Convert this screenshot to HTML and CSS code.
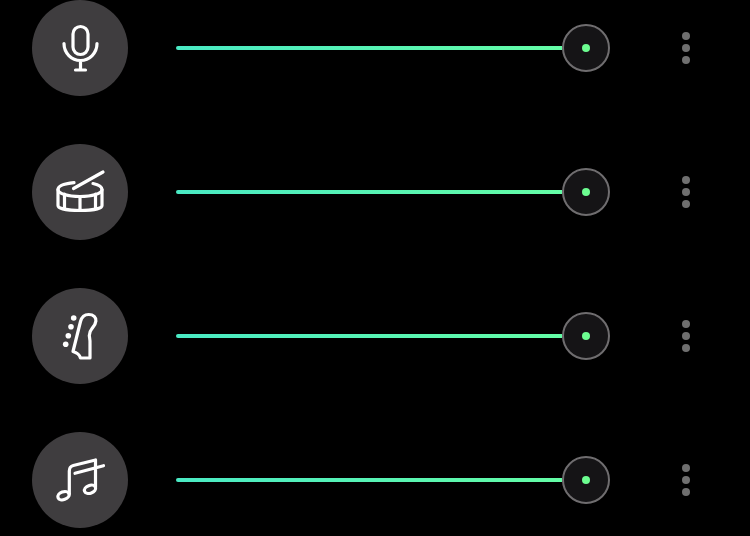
FILE: index.html
```html
<!DOCTYPE html>
<html lang="en">
<head>
  <meta charset="UTF-8" />
  <meta name="viewport" content="width=device-width, initial-scale=1.0"/>
  <title>Mixer</title>
  <link rel="stylesheet" href="styles.css">
</head>
<body>
  <div class="mixer">

    <!-- Vocals -->
    <div class="channel">
      <div class="channel-icon">
        <svg viewBox="0 0 96 96">
          <rect x="41" y="26.500" width="15" height="28" rx="7.500"/>
          <path d="M32 43.500a16.500 17 0 0 0 33 0M48.500 60.500v9.500M43.500 70h10"/>
        </svg>
      </div>
      <div class="slider">
        <div class="slider-track"></div>
        <div class="slider-knob"><span></span></div>
      </div>
      <div class="more"><span></span><span></span><span></span></div>
    </div>

    <!-- Drums -->
    <div class="channel">
      <div class="channel-icon">
        <svg viewBox="0 0 96 96">
          <path d="M41.500 44.500 71 28M42 38.600C32 39.600 26 42 26 45.500c0 4 9.800 7 22 7s22-3 22-7c0-2.700-3.500-4.800-9-6"/>
          <path d="M26 45.500v16c0 3 9.800 5 22 5s22-2 22-5v-16M32.500 50v15M48 52.500V66.500M63.500 50v15"/>
        </svg>
      </div>
      <div class="slider">
        <div class="slider-track"></div>
        <div class="slider-knob"><span></span></div>
      </div>
      <div class="more"><span></span><span></span><span></span></div>
    </div>

    <!-- Guitar -->
    <div class="channel">
      <div class="channel-icon">
        <svg viewBox="0 0 96 96">
          <path d="M58 70H48.500c-1-3.500-4-5.500-7.500-6.500L48.500 33.500c1.300-5 4.300-7 8.200-7 4.800 0 7.500 3 7.200 6.500-.3 3.500-2.200 5.500-3.900 7.500-1.800 2.200-2.800 4.200-2.700 7 .2 2.500 1 5 .7 8z"/>
          <circle class="peg" cx="41.700" cy="30" r="2.800"/>
          <circle class="peg" cx="39" cy="38.700" r="2.800"/>
          <circle class="peg" cx="36.300" cy="47.700" r="2.800"/>
          <circle class="peg" cx="33.700" cy="56.300" r="2.800"/>
        </svg>
      </div>
      <div class="slider">
        <div class="slider-track"></div>
        <div class="slider-knob"><span></span></div>
      </div>
      <div class="more"><span></span><span></span><span></span></div>
    </div>

    <!-- Other -->
    <div class="channel">
      <div class="channel-icon">
        <svg viewBox="0 0 96 96">
          <ellipse cx="31.500" cy="63.700" rx="5.800" ry="3.900" transform="rotate(-20 31.500 63.700)"/>
          <ellipse cx="58" cy="57.300" rx="5.800" ry="3.900" transform="rotate(-20 58 57.300)"/>
          <path d="M37.300 62V39c0-3 1.200-4.800 4-5.500L63.500 28v27.500M43 41.300l28.500-7.600"/>
        </svg>
      </div>
      <div class="slider">
        <div class="slider-track"></div>
        <div class="slider-knob"><span></span></div>
      </div>
      <div class="more"><span></span><span></span><span></span></div>
    </div>

  </div>
</body>
</html>
```

FILE: styles.css
```css
* {
  box-sizing: border-box;
  margin: 0;
  padding: 0;
}

html,
body {
  height: 100%;
  overflow: hidden;
  background-color: #000;
}

.mixer {
  display: flex;
  flex-direction: column;
  gap: 48px;
  padding: 0 32px;
}

.channel {
  display: flex;
  align-items: center;
  height: 96px;
}

.channel-icon {
  width: 96px;
  height: 96px;
  border-radius: 50%;
  background-color: #3f3d3f;
  flex-shrink: 0;
}

.channel-icon svg {
  display: block;
  width: 96px;
  height: 96px;
  fill: none;
  stroke: #fff;
  stroke-width: 3.2;
  stroke-linecap: round;
  stroke-linejoin: round;
}

.channel-icon .peg {
  fill: #fff;
  stroke: none;
}

/* Volume slider */
.slider {
  display: flex;
  align-items: center;
  width: 434px;
  margin-left: 48px;
}

.slider-track {
  flex: 1;
  height: 4px;
  border-radius: 2px 0 0 2px;
  background: linear-gradient(to right, #4aeac4, #64fda6);
}

.slider-knob {
  display: flex;
  justify-content: center;
  align-items: center;
  width: 48px;
  height: 48px;
  border: 2px solid #6f6d6f;
  border-radius: 50%;
  background-color: #151416;
}

.slider-knob span {
  width: 8px;
  height: 8px;
  border-radius: 50%;
  background-color: #6cfd90;
}

/* Three dots menu */
.more {
  display: flex;
  flex-direction: column;
  gap: 4px;
  margin-left: 72px;
}

.more span {
  width: 8px;
  height: 8px;
  border-radius: 50%;
  background-color: #6f6f6f;
}
```
